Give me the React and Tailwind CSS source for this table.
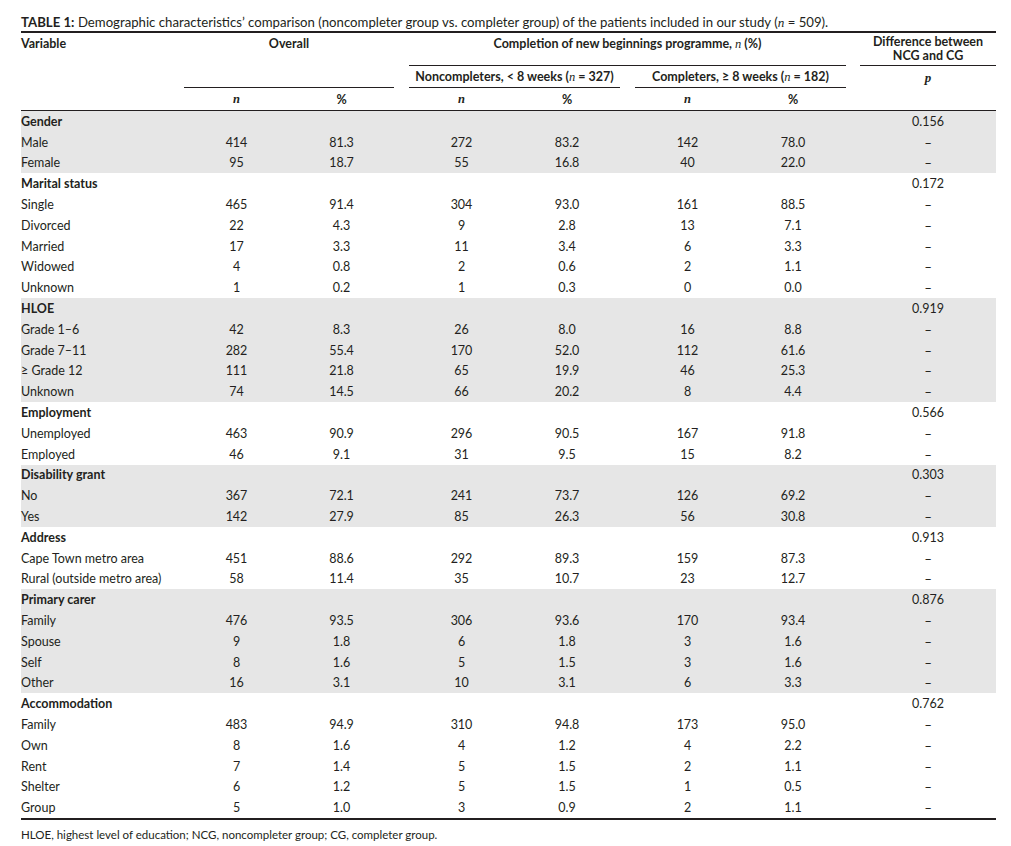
import React from "react";

const groups = [
  { name: "Gender", p: "0.156", shade: true, rows: [
    ["Male", "414", "81.3", "272", "83.2", "142", "78.0"],
    ["Female", "95", "18.7", "55", "16.8", "40", "22.0"],
  ]},
  { name: "Marital status", p: "0.172", shade: false, rows: [
    ["Single", "465", "91.4", "304", "93.0", "161", "88.5"],
    ["Divorced", "22", "4.3", "9", "2.8", "13", "7.1"],
    ["Married", "17", "3.3", "11", "3.4", "6", "3.3"],
    ["Widowed", "4", "0.8", "2", "0.6", "2", "1.1"],
    ["Unknown", "1", "0.2", "1", "0.3", "0", "0.0"],
  ]},
  { name: "HLOE", p: "0.919", shade: true, rows: [
    ["Grade 1–6", "42", "8.3", "26", "8.0", "16", "8.8"],
    ["Grade 7–11", "282", "55.4", "170", "52.0", "112", "61.6"],
    ["≥ Grade 12", "111", "21.8", "65", "19.9", "46", "25.3"],
    ["Unknown", "74", "14.5", "66", "20.2", "8", "4.4"],
  ]},
  { name: "Employment", p: "0.566", shade: false, rows: [
    ["Unemployed", "463", "90.9", "296", "90.5", "167", "91.8"],
    ["Employed", "46", "9.1", "31", "9.5", "15", "8.2"],
  ]},
  { name: "Disability grant", p: "0.303", shade: true, rows: [
    ["No", "367", "72.1", "241", "73.7", "126", "69.2"],
    ["Yes", "142", "27.9", "85", "26.3", "56", "30.8"],
  ]},
  { name: "Address", p: "0.913", shade: false, rows: [
    ["Cape Town metro area", "451", "88.6", "292", "89.3", "159", "87.3"],
    ["Rural (outside metro area)", "58", "11.4", "35", "10.7", "23", "12.7"],
  ]},
  { name: "Primary carer", p: "0.876", shade: true, rows: [
    ["Family", "476", "93.5", "306", "93.6", "170", "93.4"],
    ["Spouse", "9", "1.8", "6", "1.8", "3", "1.6"],
    ["Self", "8", "1.6", "5", "1.5", "3", "1.6"],
    ["Other", "16", "3.1", "10", "3.1", "6", "3.3"],
  ]},
  { name: "Accommodation", p: "0.762", shade: false, rows: [
    ["Family", "483", "94.9", "310", "94.8", "173", "95.0"],
    ["Own", "8", "1.6", "4", "1.2", "4", "2.2"],
    ["Rent", "7", "1.4", "5", "1.5", "2", "1.1"],
    ["Shelter", "6", "1.2", "5", "1.5", "1", "0.5"],
    ["Group", "5", "1.0", "3", "0.9", "2", "1.1"],
  ]},
];

const GRID = "grid grid-cols-[163px_105px_105px_15px_105px_106px_15px_105px_106px_14px_136px]";

const N = ({ bold }) => (
  <span className={`italic ${bold ? "font-bold" : "font-normal"}`} style={{ fontFamily: '"Liberation Serif", serif' }}>n</span>
);

function Row({ cells, shade, bold, p }) {
  return (
    <div className={`${GRID} h-[20.8px] items-center ${shade ? "bg-[#e6e6e6]" : ""}`}>
      <div className={bold ? "font-bold" : ""}>{cells[0]}</div>
      <div className="text-center">{cells[1]}</div>
      <div className="text-center">{cells[2]}</div>
      <div />
      <div className="text-center">{cells[3]}</div>
      <div className="text-center">{cells[4]}</div>
      <div />
      <div className="text-center">{cells[5]}</div>
      <div className="text-center">{cells[6]}</div>
      <div />
      <div className="text-center">
        {p === "–" ? (
          <span style={{ fontFamily: '"Open Sans", sans-serif' }}>–</span>
        ) : (
          p
        )}
      </div>
    </div>
  );
}

export default function App() {
  return (
    <div className="bg-white w-[1011px] h-[846px] text-[#231f20] text-[12.5px] leading-[15px]" style={{ fontFamily: 'Lato, "Open Sans", sans-serif' }}>
      <div className="ml-[21px] w-[975px]">
        <div className="pt-[15px] pb-[1px] text-[13.2px] leading-[14px] border-b-2 border-[#231f20]">
          <span className="font-bold">TABLE 1:</span> Demographic characteristics’ comparison (noncompleter group vs. completer group) of the patients included in our study (<N /> = 509).
        </div>
        <div className={`${GRID} grid-rows-[33px_22px_22px] border-b border-[#231f20] font-bold`}>
          <div className="col-start-1 row-start-1 pt-[3px]">Variable</div>
          <div className="col-start-2 col-span-2 row-start-1 row-span-2 text-center pt-[3px] border-b border-[#231f20]">Overall</div>
          <div className="col-start-5 col-span-5 row-start-1 text-center pt-[3px] border-b border-[#231f20]">
            Completion of new beginnings programme, <N /> (%)
          </div>
          <div className="col-start-11 row-start-1 text-center pt-[2px] leading-[14px] border-b border-[#231f20]">
            Difference between<br />NCG and CG
          </div>
          <div className="col-start-5 col-span-2 row-start-2 flex items-center justify-center border-b border-[#231f20]">
            <span>Noncompleters, &lt; 8 weeks (<N /> = 327)</span>
          </div>
          <div className="col-start-8 col-span-2 row-start-2 flex items-center justify-center border-b border-[#231f20]">
            <span>Completers, ≥ 8 weeks (<N /> = 182)</span>
          </div>
          <div className="col-start-11 row-start-2 flex items-center justify-center">
            <span className="italic font-bold text-[13px]" style={{ fontFamily: '"Liberation Serif", serif' }}>p</span>
          </div>
          <div className="col-start-2 row-start-3 flex items-center justify-center"><N bold /></div>
          <div className="col-start-3 row-start-3 flex items-center justify-center">%</div>
          <div className="col-start-5 row-start-3 flex items-center justify-center"><N bold /></div>
          <div className="col-start-6 row-start-3 flex items-center justify-center">%</div>
          <div className="col-start-8 row-start-3 flex items-center justify-center"><N bold /></div>
          <div className="col-start-9 row-start-3 flex items-center justify-center">%</div>
        </div>
        <div className="border-b-2 border-[#231f20]">
          {groups.map((g) => (
            <React.Fragment key={g.name}>
              <Row cells={[g.name, "", "", "", "", "", ""]} shade={g.shade} bold p={g.p} />
              {g.rows.map((r, i) => (
                <Row key={i} cells={r} shade={g.shade} p="–" />
              ))}
            </React.Fragment>
          ))}
        </div>
        <div className="pt-[8px] text-[11.5px] leading-[13px]">
          HLOE, highest level of education; NCG, noncompleter group; CG, completer group.
        </div>
      </div>
    </div>
  );
}
